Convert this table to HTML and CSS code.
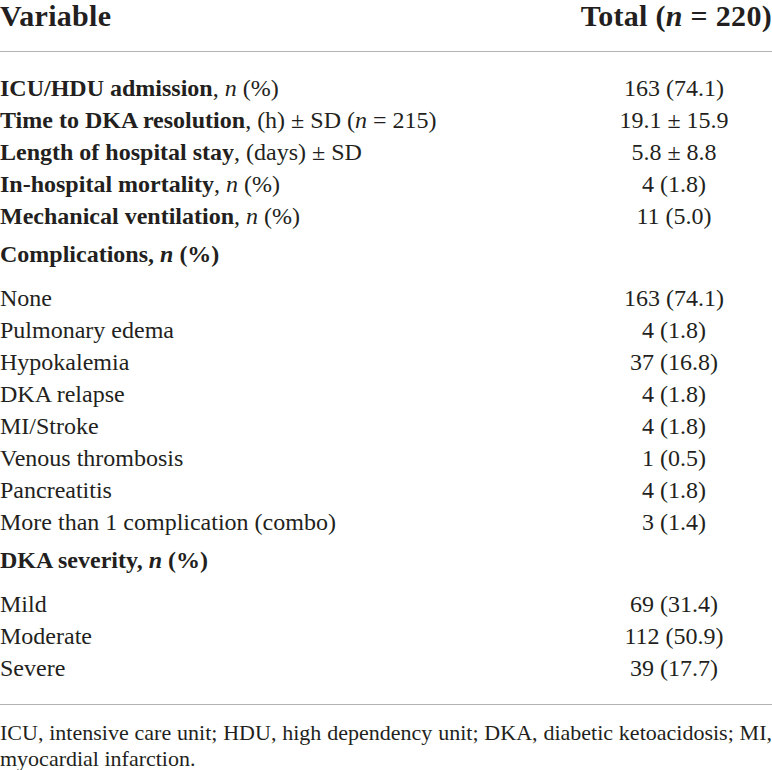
FILE: index.html
```html
<!DOCTYPE html>
<html lang="en">
<head>
  <meta charset="UTF-8" />
  <title>DKA outcomes</title>
  <link rel="stylesheet" href="styles.css">
</head>
<body>

  <table class="stats">
    <thead>
      <tr>
        <th class="col-var">Variable</th>
        <th class="col-total">Total (<i>n</i> = 220)</th>
      </tr>
    </thead>
    <tbody>
      <tr class="first">
        <td><b>ICU/HDU admission</b>, <i>n</i> (%)</td>
        <td class="num">163 (74.1)</td>
      </tr>
      <tr>
        <td><b>Time to DKA resolution</b>, (h) ± SD (<i>n</i> = 215)</td>
        <td class="num">19.1 ± 15.9</td>
      </tr>
      <tr>
        <td><b>Length of hospital stay</b>, (days) ± SD</td>
        <td class="num">5.8 ± 8.8</td>
      </tr>
      <tr>
        <td><b>In-hospital mortality</b>, <i>n</i> (%)</td>
        <td class="num">4 (1.8)</td>
      </tr>
      <tr>
        <td><b>Mechanical ventilation</b>, <i>n</i> (%)</td>
        <td class="num">11 (5.0)</td>
      </tr>

      <tr class="group">
        <td><b>Complications, <i>n</i> (%)</b></td>
        <td></td>
      </tr>
      <tr><td>None</td><td class="num">163 (74.1)</td></tr>
      <tr><td>Pulmonary edema</td><td class="num">4 (1.8)</td></tr>
      <tr><td>Hypokalemia</td><td class="num">37 (16.8)</td></tr>
      <tr><td>DKA relapse</td><td class="num">4 (1.8)</td></tr>
      <tr><td>MI/Stroke</td><td class="num">4 (1.8)</td></tr>
      <tr><td>Venous thrombosis</td><td class="num">1 (0.5)</td></tr>
      <tr><td>Pancreatitis</td><td class="num">4 (1.8)</td></tr>
      <tr><td>More than 1 complication (combo)</td><td class="num">3 (1.4)</td></tr>

      <tr class="group">
        <td><b>DKA severity, <i>n</i> (%)</b></td>
        <td></td>
      </tr>
      <tr><td>Mild</td><td class="num">69 (31.4)</td></tr>
      <tr><td>Moderate</td><td class="num">112 (50.9)</td></tr>
      <tr class="last"><td>Severe</td><td class="num">39 (17.7)</td></tr>
    </tbody>
  </table>

  <p class="footnote">ICU, intensive care unit; HDU, high dependency unit; DKA, diabetic ketoacidosis; MI, myocardial infarction.</p>

</body>
</html>
```

FILE: styles.css
```css
body {
  margin: 0;
  font-family: "Liberation Serif", "Times New Roman", serif;
  color: #231f20;
  background-color: #ffffff;
}

.stats {
  width: 100%;
  border-collapse: collapse;
  font-size: 24px;
}

.stats th {
  font-size: 30px;
  letter-spacing: 0.3px;
  line-height: 32px;
  padding: 0 0 19px 0;
  border-bottom: 1px solid #b4b4b4;
  text-align: left;
}

.stats th.col-total {
  width: 198px;
  text-align: right;
  white-space: nowrap;
}

.stats td {
  padding: 0;
  height: 32px;
  line-height: 32px;
  white-space: nowrap;
}

.stats td.num {
  text-align: center;
  padding-left: 2px;
}

.stats tr.first td {
  padding-top: 20px;
}

.stats tr.group td {
  padding-top: 6px;
  padding-bottom: 12px;
}

.stats tr.last td {
  padding-bottom: 20px;
  border-bottom: 1px solid #b4b4b4;
}

.footnote {
  margin: 0;
  padding-top: 15px;
  font-size: 22px;
  line-height: 26px;
  text-align: justify;
}
```
